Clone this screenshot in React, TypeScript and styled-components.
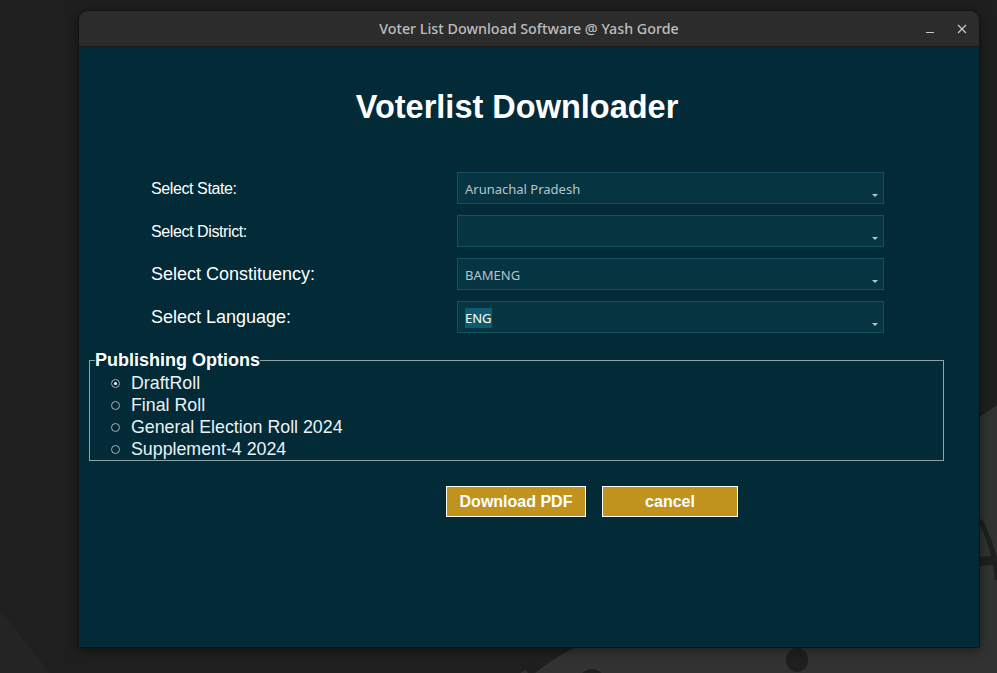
import React from 'react';
import styled, { createGlobalStyle } from 'styled-components';

const GlobalStyle = createGlobalStyle`
  html, body {
    margin: 0;
    padding: 0;
    background: #1f1f1f;
    overflow: hidden;
  }
`;

const Desktop = styled.div`
  position: relative;
  width: 997px;
  height: 673px;
  padding: 10px 0 0 78px;
  box-sizing: border-box;
  font-family: 'Liberation Sans', Arial, sans-serif;
`;

const Wallpaper = styled.svg`
  position: absolute;
  left: 0;
  top: 0;
  width: 997px;
  height: 673px;
  z-index: 0;
`;

const Window = styled.div`
  position: relative;
  z-index: 1;
  width: 902px;
  height: 638px;
  display: flex;
  flex-direction: column;
  border-radius: 10px 10px 0 0;
  border: 1px solid #111417;
  box-sizing: border-box;
  overflow: hidden;
  box-shadow: 0 2px 12px rgba(0, 0, 0, 0.45);
`;

const TitleBar = styled.div`
  height: 35px;
  flex-shrink: 0;
  background: #2c2c2c;
  display: flex;
  align-items: center;
  justify-content: center;
  position: relative;
  color: #bdbdbd;
  font-family: 'Noto Sans', 'DejaVu Sans', sans-serif;
  font-size: 14.3px;
  font-weight: 500;
`;

const WinControls = styled.div`
  position: absolute;
  right: 12px;
  top: 0;
  height: 100%;
  display: flex;
  align-items: center;
  gap: 22px;
  color: #c8c8c8;
`;

const Content = styled.div`
  flex: 1;
  background: #022a37;
  display: flex;
  flex-direction: column;
  border-top: 1px solid #1b1b1b;
`;

const Heading = styled.h1`
  margin: 41px 0 0;
  padding-right: 24px;
  text-align: center;
  color: #ffffff;
  font-size: 32.5px;
  line-height: 38px;
  font-weight: bold;
`;

const Form = styled.div`
  margin: 46px 0 0 72px;
  display: grid;
  grid-template-columns: 306px 427px;
  grid-auto-rows: 32px;
  row-gap: 11px;
`;

const Label = styled.div<{ $size: number }>`
  display: flex;
  align-items: center;
  color: #ffffff;
  font-size: ${({ $size }) => $size}px;
  letter-spacing: ${({ $size }) => ($size < 17 ? '-0.4px' : '0')};
  padding-top: ${({ $size }) => ($size < 17 ? '2px' : '0')};
`;

const Combo = styled.div`
  position: relative;
  background: #073441;
  border: 1px solid #15505f;
  box-sizing: border-box;
  padding: 7px 0 0 7px;
  font-family: 'Noto Sans', 'DejaVu Sans', sans-serif;
  font-size: 13px;
  color: #b4c6ca;
`;

const Selected = styled.span`
  background: #0f5a6e;
  color: #ffffff;
  padding: 1px 0;
`;

const Arrow = styled.span`
  position: absolute;
  right: 5px;
  bottom: 6px;
  width: 0;
  height: 0;
  border-left: 3px solid transparent;
  border-right: 3px solid transparent;
  border-top: 3px solid #b4c6ca;
`;

const Group = styled.fieldset`
  margin: 17px 0 0 10px;
  width: 855px;
  box-sizing: border-box;
  border: 1px solid #8fa3aa;
  padding: 1px 0 0 21px;
  min-inline-size: 0;
`;

const Legend = styled.legend`
  padding: 0;
  margin-left: -16px;
  color: #ffffff;
  font-size: 18px;
  font-weight: bold;
  line-height: 21px;
`;

const Option = styled.div`
  height: 22px;
  display: flex;
  align-items: center;
  gap: 11px;
  color: #ecf2f4;
  font-size: 17.8px;
`;

const Radio = styled.span<{ $checked?: boolean }>`
  width: 7px;
  height: 7px;
  border-radius: 50%;
  border: 1px solid #9fb3b9;
  display: inline-flex;
  align-items: center;
  justify-content: center;
  &::after {
    content: '';
    width: 3px;
    height: 3px;
    border-radius: 50%;
    background: ${({ $checked }) => ($checked ? '#ffffff' : 'transparent')};
  }
`;

const Actions = styled.div`
  margin: 25px 0 0 367px;
  display: flex;
  gap: 16px;
`;

const Button = styled.button<{ $width: number }>`
  width: ${({ $width }) => $width}px;
  height: 31px;
  background: #c0931f;
  border: 1px solid #ffffff;
  color: #ffffff;
  font-family: 'Liberation Sans', Arial, sans-serif;
  font-size: 16px;
  font-weight: bold;
  padding: 0;
`;

const fields = [
  { label: 'Select State:', size: 16, value: 'Arunachal Pradesh' },
  { label: 'Select District:', size: 16, value: '' },
  { label: 'Select Constituency:', size: 18, value: 'BAMENG' },
  { label: 'Select Language:', size: 18, value: 'ENG', selected: true },
];

const options = ['DraftRoll', 'Final Roll', 'General Election Roll 2024', 'Supplement-4 2024'];

function App() {
  return (
    <Desktop>
      <GlobalStyle />
      <Wallpaper viewBox="0 0 997 673">
        <path d="M0 610 L50 673 L0 673 Z" fill="#242424" />
        <path d="M997 405 C900 470 760 560 520 673 L997 673 Z" fill="#323232" />
        <path d="M528 673 C600 610 760 580 997 560" stroke="#1f1f1f" strokeWidth="9" fill="none" />
        <path d="M980 520 C990 540 997 560 997 580" stroke="#1f1f1f" strokeWidth="5" fill="none" />
        <ellipse cx="797" cy="660" rx="11" ry="12" fill="#1f1f1f" />
        <circle cx="592" cy="682" r="13" fill="#1f1f1f" />
      </Wallpaper>
      <Window>
        <TitleBar>
          Voter List Download Software @ Yash Gorde
          <WinControls>
            <svg width="10" height="10" viewBox="0 0 10 10">
              <path d="M1 8.5 H9" stroke="#c8c8c8" strokeWidth="1.2" />
            </svg>
            <svg width="10" height="10" viewBox="0 0 10 10">
              <path d="M1 1 L9 9 M9 1 L1 9" stroke="#c8c8c8" strokeWidth="1.3" />
            </svg>
          </WinControls>
        </TitleBar>
        <Content>
          <Heading>Voterlist Downloader</Heading>
          <Form>
            {fields.map((f) => (
              <React.Fragment key={f.label}>
                <Label $size={f.size}>{f.label}</Label>
                <Combo>
                  {f.selected ? <Selected>{f.value}</Selected> : f.value}
                  <Arrow />
                </Combo>
              </React.Fragment>
            ))}
          </Form>
          <Group>
            <Legend>Publishing Options</Legend>
            {options.map((o, i) => (
              <Option key={o}>
                <Radio $checked={i === 0} />
                {o}
              </Option>
            ))}
          </Group>
          <Actions>
            <Button $width={140}>Download PDF</Button>
            <Button $width={136}>cancel</Button>
          </Actions>
        </Content>
      </Window>
    </Desktop>
  );
}

export default App;
